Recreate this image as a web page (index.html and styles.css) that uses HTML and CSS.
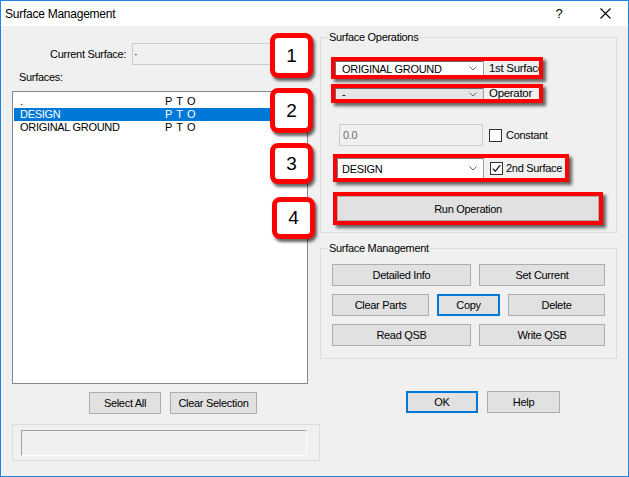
FILE: index.html
```html
<!DOCTYPE html>
<html>
<head>
<meta charset="utf-8">
<link rel="stylesheet" href="styles.css">
</head>
<body>
<div class="window">
  <div class="titlebar">
    <span class="title">Surface Management</span>
    <span class="tb-help">?</span>
    <span class="tb-close"><svg width="11" height="11" viewBox="0 0 11 11"><path d="M0.5 0.5 L10.5 10.5 M10.5 0.5 L0.5 10.5" stroke="#000" stroke-width="1.1" fill="none"/></svg></span>
  </div>
  <div class="client">
    <div class="left">
      <div class="cur-row">
        <span class="cur-lbl">Current Surface:</span>
        <div class="cur-field">·</div>
      </div>
      <div class="surf-lbl">Surfaces:</div>
      <div class="listbox">
        <div class="item"><span class="name">.</span><span class="flags">P T O</span></div>
        <div class="item sel"><span class="name">DESIGN</span><span class="flags">P T O</span></div>
        <div class="item"><span class="name">ORIGINAL GROUND</span><span class="flags">P T O</span></div>
      </div>
      <div class="btn-row">
        <div class="btn w-select">Select All</div>
        <div class="btn w-clearsel">Clear Selection</div>
      </div>
      <div class="status-group"><div class="status-box"></div></div>
    </div>

    <div class="right">
      <div class="group ops">
        <span class="legend">Surface Operations</span>
        <div class="rbox rb1">
          <div class="combo white"><span class="ctext">ORIGINAL GROUND</span><svg class="chev" width="8" height="5" viewBox="0 0 8 5"><path d="M0.5 0.5 L4 4 L7.5 0.5" stroke="#6a6a6a" fill="none"/></svg></div>
          <div class="side-lbl">1st Surface</div>
        </div>
        <div class="rbox rb2">
          <div class="combo grey"><span class="ctext">-</span><svg class="chev" width="8" height="5" viewBox="0 0 8 5"><path d="M0.5 0.5 L4 4 L7.5 0.5" stroke="#6a6a6a" fill="none"/></svg></div>
          <div class="side-lbl">Operator</div>
        </div>
        <div class="const-row">
          <div class="edit-dis">0.0</div>
          <div class="chk"></div>
          <span class="chk-lbl">Constant</span>
        </div>
        <div class="rbox rb3">
          <div class="combo white c3"><span class="ctext">DESIGN</span><svg class="chev" width="8" height="5" viewBox="0 0 8 5"><path d="M0.5 0.5 L4 4 L7.5 0.5" stroke="#6a6a6a" fill="none"/></svg></div>
          <div class="side-chk">
            <div class="chk"><svg width="11" height="11" viewBox="0 0 11 11"><path d="M1.8 5.6 L4.3 8.2 L9.3 2.2" stroke="#222" stroke-width="1.3" fill="none"/></svg></div>
            <span class="chk-lbl2">2nd Surface</span>
          </div>
        </div>
        <div class="rbox rb4">
          <div class="btn run">Run Operation</div>
        </div>
      </div>

      <div class="group mgmt">
        <span class="legend">Surface Management</span>
        <div class="brow">
          <div class="btn w-wide">Detailed Info</div>
          <div class="btn w-wide2">Set Current</div>
        </div>
        <div class="brow">
          <div class="btn w-mid">Clear Parts</div>
          <div class="btn focus w-copy">Copy</div>
          <div class="btn w-mid">Delete</div>
        </div>
        <div class="brow">
          <div class="btn w-wide">Read QSB</div>
          <div class="btn w-wide2">Write QSB</div>
        </div>
      </div>

      <div class="dlg-btns">
        <div class="btn focus w-ok">OK</div>
        <div class="btn w-help">Help</div>
      </div>
    </div>

    <div class="callout co1">1</div>
    <div class="callout co2">2</div>
    <div class="callout co3">3</div>
    <div class="callout co4">4</div>
  </div>
</div>
</body>
</html>
```
FILE: styles.css
```css
* { box-sizing: border-box; }
html, body { margin: 0; padding: 0; }
body {
  width: 629px; height: 477px; overflow: hidden; background: #fff;
  font-family: "Liberation Sans", Arial, sans-serif; font-size: 11px;
  letter-spacing: -0.3px; color: #000;
}
.window {
  width: 629px; height: 477px; border: 1px solid #1c86e0;
  display: flex; flex-direction: column; background: #f0f0f0;
}
.titlebar {
  flex: none; height: 25px; background: #fff; display: flex; align-items: center;
}
.title { margin-left: 4px; font-size: 12px; letter-spacing: -0.25px; }
.tb-help { margin-left: auto; width: 46px; text-align: center; font-size: 13px; letter-spacing: 0; }
.tb-close { width: 46px; display: flex; justify-content: center; align-items: center; }

.client { flex: 1; position: relative; display: flex; padding-left: 11px; }

.left { width: 308px; display: flex; flex-direction: column; }
.cur-row { margin-top: 17px; height: 22px; display: flex; align-items: center; }
.cur-lbl { width: 114px; text-align: right; }
.cur-field {
  margin-left: 6px; width: 176px; height: 22px; border: 1px solid #cccccc;
  background: #f0f0f0; padding-left: 1px; display: flex; align-items: center;
}
.surf-lbl { margin-top: 6px; line-height: 13px; padding-left: 7px; }
.listbox {
  margin-top: 7px; width: 296px; height: 293px; border: 1px solid #828790;
  background: #fff; padding: 3px 1px 0 1px;
}
.item { height: 13px; line-height: 13px; padding-left: 6px; display: flex; white-space: nowrap; }
.item .name { width: 145px; }
.item .flags { letter-spacing: 0.6px; }
.item.sel { background: #0078d7; color: #fff; }

.btn {
  height: 22px; background: #e1e1e1; border: 1px solid #adadad;
  display: flex; align-items: center; justify-content: center; white-space: nowrap;
}
.btn.focus { border: 2px solid #0078d7; }
.btn-row { margin-top: 8px; display: flex; gap: 9px; padding-left: 77px; }
.w-select { width: 72px; }
.w-clearsel { width: 87px; }

.status-group {
  margin-top: 10px; width: 308px; height: 37px; border: 1px solid #dcdcdc;
  padding: 5px 0 0 8px;
}
.status-box {
  width: 286px; height: 26px; border: 1px solid;
  border-color: #a0a0a0 #ffffff #ffffff #a0a0a0;
}

.right { width: 297px; margin-top: 11px; display: flex; flex-direction: column; }
.group { border: 1px solid #dcdcdc; position: relative; }
.legend {
  position: absolute; top: -7px; left: 7px; line-height: 13px;
  background: #f0f0f0; padding: 0 1px;
}
.ops { height: 196px; padding: 19px 0 0 10px; }

.rbox {
  border: 4px solid #ff0000; box-shadow: 3px 3px 3px rgba(0,0,0,0.6);
  display: flex; background: #f0f0f0;
}
.rb1 { width: 212px; height: 22px; }
.rb2 { width: 212px; height: 19px; margin-top: 5px; }
.rb3 { width: 236px; height: 28px; margin-top: 8px; margin-left: 2px; }
.rb4 { width: 270px; height: 33px; margin-top: 10px; margin-left: 2px; }

.combo {
  width: 148px; flex: none; display: flex; align-items: center;
  border-left: 1px solid #6a6a6a; border-top: 1px solid #6a6a6a;
  padding-left: 6px; padding-right: 6px;
}
.combo.white { background: #fff; }
.combo.grey { background: #e5e5e5; }
.combo.c3 { width: 146px; padding-left: 4px; border-top: 1px solid #7a7a7a; border-left: 1px solid #7a7a7a; }
.ctext { flex: 1; white-space: nowrap; overflow: hidden; }
.chev { flex: none; }
.side-lbl {
  flex: 1; border-left: 1px solid #a0a0a0; padding-left: 5px;
  white-space: nowrap; overflow: hidden; display: flex; align-items: center;
  font-size: 11.5px;
}
.rb2 .side-lbl { align-items: flex-start; line-height: 10px; }
.side-chk {
  flex: 1; border-left: 1px solid #a0a0a0; display: flex; align-items: center;
  padding-left: 6px; white-space: nowrap; overflow: hidden;
}

.const-row { margin-top: 21px; margin-left: 8px; height: 22px; display: flex; align-items: center; }
.edit-dis {
  width: 144px; height: 22px; border: 1px solid #cccccc; background: #f0f0f0;
  color: #6d6d6d; padding-left: 3px; display: flex; align-items: center;
}
.chk {
  width: 13px; height: 13px; border: 1px solid #333; background: #fff; flex: none;
  display: flex; align-items: center; justify-content: center;
}
.const-row .chk { margin-left: 6px; }
.chk-lbl { margin-left: 4px; }
.chk-lbl2 { margin-left: 3px; }

.run { width: 100%; height: 100%; }

.mgmt { margin-top: 15px; height: 111px; padding: 15px 0 0 11px; }
.brow { display: flex; gap: 8px; margin-bottom: 8px; }
.w-wide { width: 139px; }
.w-wide2 { width: 126px; }
.w-mid { width: 97px; }
.w-copy { width: 63px; }

.dlg-btns { margin-top: 32px; padding-left: 86px; display: flex; gap: 9px; }
.w-ok { width: 72px; }
.w-help { width: 73px; }

.callout {
  position: absolute; width: 43px; height: 45px; background: #fff;
  border: 5px solid #ff0000; border-radius: 8px;
  box-shadow: 2px 3px 3px rgba(0,0,0,0.6);
  display: flex; align-items: center; justify-content: center;
  font-size: 19px; letter-spacing: 0;
}
.co1 { left: 269px; top: 7px; }
.co2 { left: 269px; top: 62px; }
.co3 { left: 269px; top: 117px; height: 41px; }
.co4 { left: 271px; top: 171px; height: 42px; }
```
